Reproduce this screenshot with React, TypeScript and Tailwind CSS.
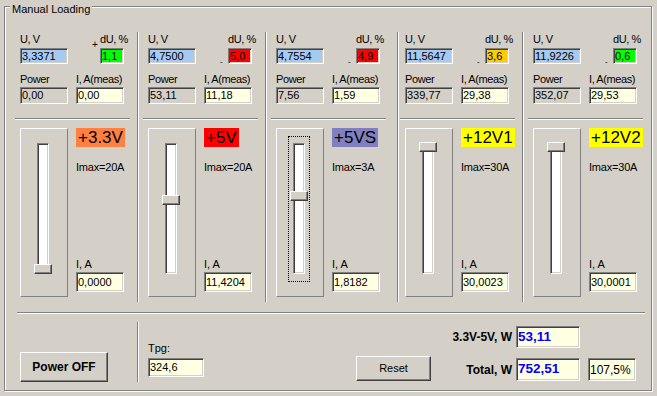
import React from "react";

const sunken =
  "border border-t-[#808080] border-l-[#808080] border-b-white border-r-white shadow-[inset_1px_1px_0_#404040,inset_-1px_-1px_0_#d4d0c8]";
const raised =
  "border border-t-white border-l-white border-b-[#404040] border-r-[#404040] shadow-[inset_-1px_-1px_0_#808080]";

function Edit({ cls, children }: { cls: string; children?: React.ReactNode }) {
  return (
    <div className={`${sunken} ${cls} shrink-0 flex items-center pl-[1px] whitespace-nowrap overflow-hidden`}>
      {children}
    </div>
  );
}

type Col = {
  w: string;
  pl: string;
  u: string;
  du: string;
  duBg: string;
  sign: "+" | "-";
  power: string;
  imeas: string;
  label: string;
  labelBg: string;
  imax: string;
  ia: string;
  thumb: number;
  focus?: boolean;
};

const cols: Col[] = [
  { w: "w-[132px]", pl: "pl-[15px]", u: "3,3371", du: "1,1", duBg: "bg-[#00ff00]", sign: "+", power: "0,00", imeas: "0,00", label: "+3.3V", labelBg: "bg-[#ff8040]", imax: "Imax=20A", ia: "0,0000", thumb: 120 },
  { w: "w-[126px]", pl: "pl-[9px]", u: "4,7500", du: "5,0", duBg: "bg-[#ff0000]", sign: "-", power: "53,11", imeas: "11,18", label: "+5V", labelBg: "bg-[#ff0000]", imax: "Imax=20A", ia: "11,4204", thumb: 51 },
  { w: "w-[130px]", pl: "pl-[9px]", u: "4,7554", du: "4,9", duBg: "bg-[#ff0000]", sign: "-", power: "7,56", imeas: "1,59", label: "+5VS", labelBg: "bg-[#8080c0]", imax: "Imax=3A", ia: "1,8182", thumb: 47, focus: true },
  { w: "w-[123px]", pl: "pl-[6px]", u: "11,5647", du: "3,6", duBg: "bg-[#ffcc00]", sign: "-", power: "339,77", imeas: "29,38", label: "+12V1", labelBg: "bg-[#ffff00]", imax: "Imax=30A", ia: "30,0023", thumb: -2 },
  { w: "w-[126px]", pl: "pl-[9px]", u: "11,9226", du: "0,6", duBg: "bg-[#00ff00]", sign: "-", power: "352,07", imeas: "29,53", label: "+12V2", labelBg: "bg-[#ffff00]", imax: "Imax=30A", ia: "30,0001", thumb: -2 },
];

function Track({ thumb }: { thumb: number }) {
  return (
    <div className={`relative w-[12px] h-[131px] bg-white ${sunken}`}>
      <div
        className={`absolute left-[-4px] w-[18px] h-[10px] bg-[#d4d0c8] ${raised}`}
        style={{ top: thumb }}
      />
    </div>
  );
}

function Slider({ thumb, focus }: { thumb: number; focus?: boolean }) {
  return (
    <div className="w-[48px] h-[169px] shrink-0 border border-t-white border-l-white border-b-[#808080] border-r-[#808080]">
      {focus ? (
        <div className="ml-[11px] mt-[7px] w-[22px] h-[146px] border border-dotted border-black">
          <div className="ml-[4px] mt-[6px]">
            <Track thumb={thumb} />
          </div>
        </div>
      ) : (
        <div className="ml-[16px] mt-[14px]">
          <Track thumb={thumb} />
        </div>
      )}
    </div>
  );
}

function Sep() {
  return <div className="w-[2px] h-full shrink-0 border-l border-l-[#808080] bg-white" />;
}

function Column({ c }: { c: Col }) {
  return (
    <div className={`${c.w} ${c.pl} h-[270px] shrink-0 pt-[1px]`}>
      <div className="w-[108px] flex justify-between h-[13px] leading-[13px] tracking-[-0.4px]">
        <span>U, V</span>
        <span>dU, %</span>
      </div>
      <div className="mt-[2px] flex h-[16px]">
        <Edit cls="w-[48px] h-[16px] bg-[#a6caf0]">{c.u}</Edit>
        <div className="w-[32px] h-[16px] shrink-0">
          {c.sign === "+" ? (
            <span className="block ml-[24px] mt-[-8px] text-[10px] leading-[10px]">+</span>
          ) : (
            <span className="block ml-[24px] mt-[10px] text-[8px] leading-[8px]">-</span>
          )}
        </div>
        <Edit cls={`w-[24px] h-[16px] ${c.duBg}`}>{c.du}</Edit>
      </div>
      <div className="mt-[9px] flex h-[13px] leading-[13px] tracking-[-0.4px]">
        <span className="w-[56px]">Power</span>
        <span>I, A(meas)</span>
      </div>
      <div className="mt-[1px] flex gap-[8px]">
        <Edit cls="w-[48px] h-[17px] bg-[#d4d0c8]">{c.power}</Edit>
        <Edit cls="w-[48px] h-[17px] bg-[#ffffe1]">{c.imeas}</Edit>
      </div>
      <div className="mt-[14px] ml-[-5px] w-[115px] h-[2px] border-t border-t-[#808080] border-b border-b-white" />
      <div className="mt-[8px] flex h-[169px]">
        <Slider thumb={c.thumb} focus={c.focus} />
        <div className="ml-[8px] flex flex-col h-[169px]">
          <div className={`self-start h-[19px] px-[2px] leading-[19px] text-[17px] ${c.labelBg}`}>{c.label}</div>
          <div className="mt-[14px] leading-[13px] tracking-[-0.2px]">{c.imax}</div>
          <div className="mt-auto leading-[13px]">I, A</div>
          <Edit cls="mt-[1px] mb-[5px] w-[48px] h-[20px] bg-[#ffffe1]">{c.ia}</Edit>
        </div>
      </div>
    </div>
  );
}

export default function App() {
  return (
    <div className="relative w-[657px] h-[396px] bg-[#d4d0c8] text-black text-[11px] overflow-hidden font-['Liberation_Sans',Arial,sans-serif]">
      <div className="pt-[6px] pl-[4px]">
        <div className="w-[648px] h-[385px] border border-[#808080] shadow-[inset_1px_1px_0_#fff,1px_1px_0_#fff]">
          <div className="mt-[25px] flex h-[270px]">
            <Column c={cols[0]} />
            <Sep />
            <Column c={cols[1]} />
            <Sep />
            <Column c={cols[2]} />
            <Sep />
            <Column c={cols[3]} />
            <Sep />
            <Column c={cols[4]} />
          </div>
          <div className="mt-[10px] ml-[12px] w-[628px] h-[2px] border-t border-t-[#808080] border-b border-b-white" />
          <div className="mt-[8px] flex h-[60px]">
            <div className="w-[132px] pl-[15px] pt-[30px] shrink-0">
              <button className={`w-[88px] h-[30px] bg-[#d4d0c8] font-bold text-[12px] ${raised}`}>Power OFF</button>
            </div>
            <Sep />
            <div className="ml-[9px] pt-[20px] w-[56px] shrink-0">
              <div className="leading-[13px]">Tpg:</div>
              <Edit cls="mt-[3px] w-[56px] h-[19px] bg-[#ffffe1]">324,6</Edit>
            </div>
            <div className="ml-[152px] pt-[34px] shrink-0">
              <button className={`w-[75px] h-[25px] bg-[#d4d0c8] text-[11px] ${raised}`}>Reset</button>
            </div>
            <div className="pt-[4px] shrink-0">
              <div className="flex items-center h-[22px]">
                <span className="w-[81px] text-right font-bold text-[12px]">3.3V-5V, W</span>
                <Edit cls="ml-[4px] w-[64px] h-[22px] bg-[#ffffe1] text-[#0000ff] font-bold text-[13.5px]">53,11</Edit>
              </div>
              <div className="mt-[10px] flex items-center h-[23px]">
                <span className="w-[81px] text-right font-bold text-[12px]">Total, W</span>
                <Edit cls="ml-[4px] w-[64px] h-[23px] bg-[#ffffe1] text-[#0000ff] font-bold text-[13.5px]">752,51</Edit>
                <Edit cls="ml-[8px] w-[48px] h-[23px] bg-[#ffffe1] text-[12px]">107,5%</Edit>
              </div>
            </div>
          </div>
        </div>
      </div>
      <span className="absolute left-[10px] top-[3px] px-[2px] bg-[#d4d0c8] leading-[13px]">Manual Loading</span>
    </div>
  );
}
